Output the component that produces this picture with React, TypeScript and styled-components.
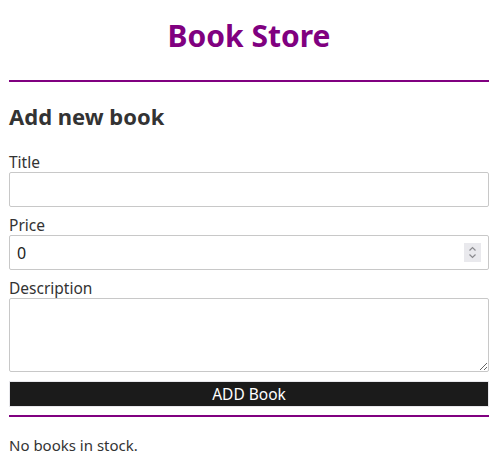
import React from "react";
import styled, { createGlobalStyle } from "styled-components";

const Global = createGlobalStyle`
  body {
    margin: 0;
    font-family: "Noto Sans", "Open Sans", sans-serif;
    color: #333;
    background: #fff;
  }
`;

const Page = styled.div`
  padding: 0 9px;
  display: flex;
  flex-direction: column;
`;

const Header = styled.h1`
  margin: 0;
  height: 80px;
  display: flex;
  align-items: center;
  justify-content: center;
  color: #800080;
  font-size: 30px;
  font-weight: 700;
  padding-bottom: 9px;
  box-sizing: border-box;
`;

const Rule = styled.hr`
  margin: 0;
  border: none;
  height: 2px;
  background: #800080;
`;

const Form = styled.form`
  display: flex;
  flex-direction: column;
`;

const Heading = styled.h2`
  margin: 19px 0 21px;
  font-size: 22px;
  line-height: 30px;
  font-weight: 700;
  color: #333;
`;

const Label = styled.label`
  font-size: 15.5px;
  line-height: 20px;
  display: block;
`;

const Field = styled.div`
  display: flex;
  flex-direction: column;
  margin-bottom: 8px;
`;

const InputWrap = styled.div`
  position: relative;
`;

const Input = styled.input`
  box-sizing: border-box;
  width: 100%;
  height: 35px;
  border: 1px solid #c8c8c8;
  border-radius: 2px;
  font-family: inherit;
  font-size: 16px;
  color: #222;
  padding: 0 7px;
  margin: 0;
  display: block;
  -moz-appearance: textfield;
  &::-webkit-inner-spin-button,
  &::-webkit-outer-spin-button {
    -webkit-appearance: none;
    margin: 0;
  }
`;

const Spinner = styled.span`
  position: absolute;
  right: 8px;
  top: 8px;
  width: 17px;
  height: 19px;
  background: #e9e9ed;
  display: flex;
  align-items: center;
  justify-content: center;
  pointer-events: none;
`;

const TextArea = styled.textarea`
  box-sizing: border-box;
  width: 100%;
  height: 74px;
  border: 1px solid #c8c8c8;
  border-radius: 2px;
  font-family: inherit;
  font-size: 16px;
  padding: 6px 8px;
  margin: 0;
  display: block;
`;

const Button = styled.button`
  height: 26px;
  background: #1b1b1b;
  color: #fff;
  border: 1px solid #e8e8ec;
  font-family: inherit;
  font-size: 15.5px;
  padding: 0;
  margin: 1px 0 8px;
`;

const Empty = styled.p`
  margin: 18px 0 0;
  font-size: 15px;
`;

export default function App() {
  return (
    <>
      <Global />
      <Page>
        <Header>Book Store</Header>
        <Rule />
        <Form onSubmit={(e) => e.preventDefault()}>
          <Heading>Add new book</Heading>
          <Field>
            <Label htmlFor="title">Title</Label>
            <Input id="title" type="text" />
          </Field>
          <Field>
            <Label htmlFor="price">Price</Label>
            <InputWrap>
              <Input id="price" type="number" defaultValue={0} />
              <Spinner>
                <svg width="9" height="13" viewBox="0 0 9 13" fill="none" stroke="#8a8a8f" strokeWidth="1.2">
                  <path d="M1.5 4.5 L4.5 1.5 L7.5 4.5" />
                  <path d="M1.5 8.5 L4.5 11.5 L7.5 8.5" />
                </svg>
              </Spinner>
            </InputWrap>
          </Field>
          <Field>
            <Label htmlFor="desc">Description</Label>
            <TextArea id="desc" />
          </Field>
          <Button type="submit">ADD Book</Button>
        </Form>
        <Rule />
        <Empty>No books in stock.</Empty>
      </Page>
    </>
  );
}
